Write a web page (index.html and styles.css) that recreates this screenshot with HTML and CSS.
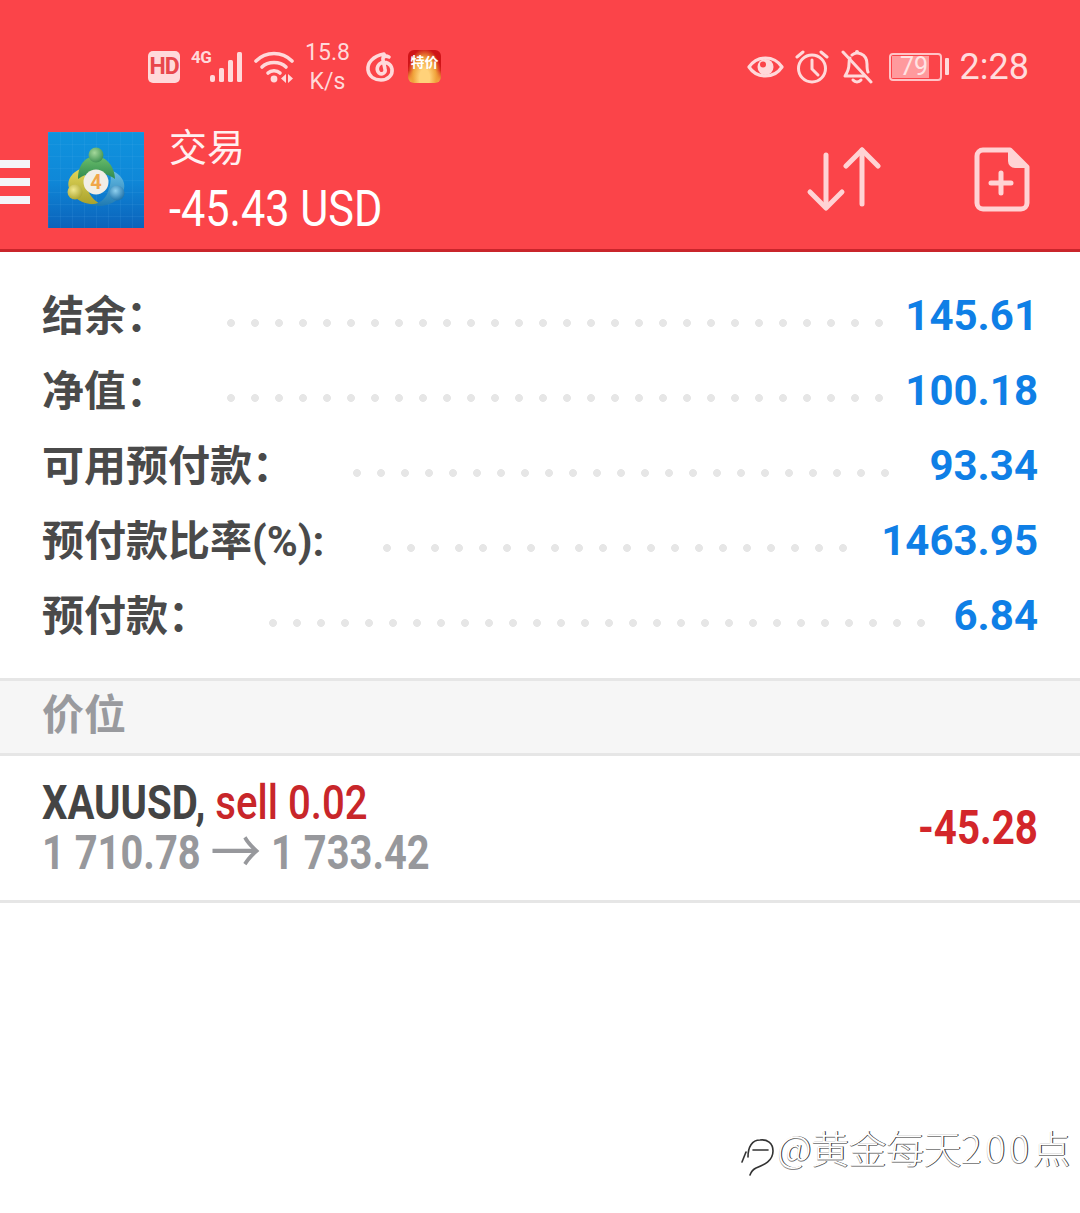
FILE: index.html
```html
<!DOCTYPE html>
<html lang="zh">
<head>
<meta charset="utf-8">
<title>交易</title>
<link rel="stylesheet" href="styles.css">
</head>
<body>
<div class="page">
  <header class="appbar">
    <div class="status">
      <div class="status-left">
        <span class="hd">HD</span>
        <span class="net">
          <span class="net-label">4G</span>
          <svg class="signal" width="35" height="32" viewBox="0 0 35 32"><g fill="#ffd9da"><rect x="1" y="24" width="5" height="7" rx="2"/><rect x="10" y="17" width="5" height="14" rx="1.5"/><rect x="19" y="9" width="5" height="22" rx="1.5"/><rect x="28" y="1" width="5" height="30" rx="1.5"/></g></svg>
        </span>
        <svg class="wifi" width="40" height="34" viewBox="0 0 40 34"><g fill="none" stroke="#ffd9da" stroke-width="3.6" stroke-linecap="round"><path d="M2 10C12 0 28 0 38 10"/><path d="M8 16C14 10 26 10 32 16"/><path d="M14 22C17 19 23 19 26 22"/></g><circle cx="20" cy="28" r="3.4" fill="#ffd9da"/><path d="M32 23v9l-5-4.500zM34 23l5 4.500-5 4.500z" fill="#ffd9da"/></svg>
        <span class="speed"><span>15.8</span><span>K/s</span></span>
        <svg class="netease" width="32" height="32" viewBox="0 0 32 32"><path d="M19 3C8 5 2 12 3 19c1 7 7 10 13 10 7 0 12-5 11-11-1-5-6-8-11-6-4 2-5 7-2 10 3 2 7 0 6-4l-2-9c-.500-3 2-5 6-3" fill="none" stroke="#ffd9da" stroke-width="3.600" stroke-linecap="round"/></svg>
        <span class="promo"><span class="promo-text">特价</span></span>
      </div>
      <div class="status-right">
        <svg class="eye" width="37" height="30" viewBox="0 0 37 30"><path d="M2 15C10 3 27 3 35 15 27 27 10 27 2 15z" fill="none" stroke="#ffd9da" stroke-width="3.200" stroke-linejoin="round"/><circle cx="18.500" cy="15" r="8" fill="#ffd9da"/><circle cx="16" cy="12.500" r="3" fill="#fb4449"/></svg>
        <svg class="alarm" width="34" height="34" viewBox="0 0 34 34"><g fill="none" stroke="#ffd9da" stroke-width="3" stroke-linecap="round"><circle cx="17" cy="18.500" r="13.500"/><path d="M17 10v9l6 6"/><path d="M2 7l6-5M32 7l-6-5"/></g></svg>
        <svg class="bell" width="32" height="34" viewBox="0 0 32 34"><g fill="none" stroke="#ffd9da" stroke-width="3" stroke-linecap="round" stroke-linejoin="round"><path d="M9 8c-1 2-1 4-1 6 0 6-2 9-4 12h19"/><path d="M11 5c4-4 15-2 15 9 0 4 0 6 1 8"/><path d="M2 2l28 30"/><path d="M12 30c2 2.500 6 2.500 8 0"/></g><rect x="14" y="0" width="4" height="4" rx="2" fill="#ffd9da"/></svg>
        <span class="battery-wrap">
          <span class="battery"><span class="battery-fill"></span><span class="battery-num">79</span></span>
          <span class="battery-tip"></span>
        </span>
        <span class="clock">2:28</span>
      </div>
    </div>
    <div class="toolbar">
      <div class="burger"><i></i><i></i><i></i></div>
      <svg class="logo" width="96" height="96" viewBox="0 0 96 96">
        <defs>
          <linearGradient id="sky" x1="0" y1="0" x2="0" y2="1"><stop offset="0" stop-color="#0f93de"/><stop offset=".5" stop-color="#0f88d8"/><stop offset="1" stop-color="#0b62ba"/></linearGradient>
          <pattern id="gridlines" width="12" height="12" patternUnits="userSpaceOnUse"><path d="M12 0H0V12" fill="none" stroke="#5fb8ea" stroke-opacity=".22" stroke-width="1"/></pattern>
          <linearGradient id="gGreen" x1="0" y1="0" x2="0" y2="1"><stop offset="0" stop-color="#6cbf6c"/><stop offset="1" stop-color="#2f8a4e"/></linearGradient>
          <linearGradient id="gYellow" x1="0" y1="0" x2="0" y2="1"><stop offset="0" stop-color="#e3d85c"/><stop offset="1" stop-color="#a9a22c"/></linearGradient>
          <linearGradient id="gBlue" x1="0" y1="0" x2="0" y2="1"><stop offset="0" stop-color="#6cc0e6"/><stop offset="1" stop-color="#1f7ab2"/></linearGradient>
          <radialGradient id="hGreen" cx=".4" cy=".35" r=".7"><stop offset="0" stop-color="#a4d89a"/><stop offset="1" stop-color="#3a8f4e"/></radialGradient>
          <radialGradient id="hYellow" cx=".4" cy=".35" r=".7"><stop offset="0" stop-color="#f0e88c"/><stop offset="1" stop-color="#a9a22c"/></radialGradient>
          <radialGradient id="hBlue" cx=".4" cy=".35" r=".7"><stop offset="0" stop-color="#8fd0ee"/><stop offset="1" stop-color="#1b6ea6"/></radialGradient>
        </defs>
        <rect width="96" height="96" fill="url(#sky)"/>
        <rect width="96" height="96" fill="url(#gridlines)"/>
        <path d="M36 36C26 38 18 47 21 56c4 12 17 18 31 16-6-4-10-8-12-14-2-6-3-14-4-22z" fill="url(#gYellow)"/>
        <path d="M62 38c12 4 18 14 12 24-6 10-20 15-34 10 8 1 14-2 18-8 4-6 6-18 4-26z" fill="url(#gBlue)"/>
        <path d="M30 47c0-17 10-23 18-23s19 9 19 23c-5-4-12-6-19-6s-13 2-18 6z" fill="url(#gGreen)"/>
        <circle cx="48" cy="23" r="7.500" fill="url(#hGreen)"/>
        <circle cx="27" cy="60" r="7.500" fill="url(#hYellow)"/>
        <circle cx="69" cy="61" r="7.500" fill="url(#hBlue)"/>
        <circle cx="48" cy="50" r="12.500" fill="#f1eee6"/>
        <text class="logo-four" x="48" y="57">4</text>
      </svg>
      <div class="titles">
        <span class="title">交易</span>
        <span class="amount narrow">-45.43 USD</span>
      </div>
      <div class="actions">
        <svg class="sort" width="76" height="66" viewBox="0 0 76 66"><g fill="none" stroke="#ffd3d4" stroke-width="5" stroke-linecap="round" stroke-linejoin="round"><path d="M20 8v52"/><path d="M4 45l16 16 16-16"/><path d="M56 3v54"/><path d="M40 19L56 3l16 16"/></g></svg>
        <svg class="doc" width="56" height="66" viewBox="0 0 56 66"><path d="M9 3h27l17 17v36a6 6 0 0 1-6 6H9a6 6 0 0 1-6-6V9a6 6 0 0 1 6-6z" fill="none" stroke="#ffd3d4" stroke-width="5" stroke-linejoin="round"/><path d="M34 3v11a7 7 0 0 0 7 7h12z" fill="#ffd3d4"/><path d="M27 26v20M17 36h20" stroke="#ffd3d4" stroke-width="5" stroke-linecap="round"/></svg>
      </div>
    </div>
  </header>

  <section class="summary">
    <div class="row"><span class="label">结余：</span><span class="dots"></span><span class="value">145.61</span></div>
    <div class="row"><span class="label">净值：</span><span class="dots"></span><span class="value">100.18</span></div>
    <div class="row"><span class="label">可用预付款：</span><span class="dots dots-short"></span><span class="value">93.34</span></div>
    <div class="row"><span class="label">预付款比率(%):</span><span class="dots"></span><span class="value">1463.95</span></div>
    <div class="row"><span class="label">预付款：</span><span class="dots"></span><span class="value">6.84</span></div>
  </section>

  <div class="section-head">价位</div>

  <div class="position">
    <div class="pos-text">
      <div class="pos-line line-main"><b class="symbol">XAUUSD,</b> <span class="side">sell 0.02</span></div>
      <div class="pos-line prices">1 710.78 <span class="arrow">→</span> 1 733.42</div>
    </div>
    <div class="profit">-45.28</div>
  </div>

  <div class="watermark">
    <svg class="wm-logo" width="36" height="42" viewBox="0 0 36 42"><g fill="none" stroke="#333" stroke-width="1.600" stroke-linecap="round"><path d="M8 22C8 12 12 5 20 5c7-1 13 3 13 11 0 10-9 14-17 17-4 2-5 4-6 7"/><path d="M13 15h15"/><path d="M2 27l4-10"/></g></svg>
    <span class="wm-text">@黄金每天<span class="wm-num">200</span>点</span>
  </div>
</div>
</body>
</html>
```

FILE: styles.css
```css
* { box-sizing: border-box; }
html, body { margin: 0; padding: 0; background: #fff; }
body { font-family: Roboto, "Noto Sans CJK SC", sans-serif; }
.page { position: relative; width: 1080px; height: 1213px; overflow: hidden; background: #fff; }

.appbar { height: 252px; background: #fb4449; border-bottom: 3px solid #c9252b; }

.status { height: 125px; padding: 8px 51px 0 148px; display: flex; justify-content: space-between; align-items: center; }
.status-left, .status-right { display: flex; align-items: center; }
.hd { width: 32px; height: 32px; border-radius: 5px; background: #ffd9da; color: #e9474c; font: 700 23px/32px Roboto, sans-serif; text-align: center; letter-spacing: -1px; }
.net { position: relative; width: 53px; height: 32px; margin-left: 11px; }
.net-label { position: absolute; left: 0; top: -3px; color: #ffd9da; font: 700 17px/18px Roboto, sans-serif; letter-spacing: -.5px; }
.signal { position: absolute; left: 18px; top: 0; }
.wifi { margin-left: 10px; margin-top: 2px; }
.speed { display: flex; flex-direction: column; align-items: center; margin-left: 11px; width: 45px; color: #ffd9da; font: 400 23px/29px Roboto, sans-serif; }
.netease { margin-left: 15px; }
.promo { width: 33px; height: 33px; margin-left: 11px; border-radius: 6px; background: radial-gradient(ellipse at 50% 85%, #ffd27a 0 22%, #f0a23a 50%, transparent 75%), linear-gradient(#cf1418 0 62%, #e8812f 85%, #f5b85f); display: flex; justify-content: center; padding-top: 3px; }
.promo-text { color: #fff; font: 700 14px/16px "Noto Sans CJK SC", sans-serif; }

.eye { margin-right: 11px; }
.alarm { margin-right: 12px; }
.bell { margin-right: 16px; }
.battery-wrap { display: flex; align-items: center; margin-right: 11px; }
.battery { position: relative; width: 53px; height: 28px; border: 2px solid #ffc4c6; border-radius: 4px; display: block; }
.battery-fill { position: absolute; left: 1px; top: 1px; bottom: 1px; width: 37px; background: #ff9a9d; }
.battery-num { position: absolute; inset: 0; text-align: center; color: #ffe3e3; font: 400 25px/24px Roboto, sans-serif; padding-right: 2px; }
.battery-tip { width: 4px; height: 17px; margin-left: 3px; border-radius: 1px; background: #ffd9da; }
.clock { color: #ffdcdd; font: 400 36px/42px Roboto, sans-serif; }

.toolbar { height: 124px; display: flex; align-items: flex-start; }
.burger { width: 30px; margin-top: 35px; display: flex; flex-direction: column; gap: 10px; }
.burger i { display: block; height: 8px; background: #f4f4f8; }
.logo { margin: 7px 0 0 18px; }
.titles { margin-left: 25px; display: flex; flex-direction: column; margin-top: -3px; }
.title { color: #fff0f0; font: 400 38px/46px "Noto Sans CJK SC", sans-serif; }
.amount { color: #fff; font: 400 50px/58px Roboto, sans-serif; margin-top: 12px; }
.narrow { display: inline-block; transform: scaleX(.865); transform-origin: left center; white-space: nowrap; }
.actions { margin-left: auto; display: flex; align-items: flex-start; padding-right: 50px; }
.sort { margin-top: 22px; }
.doc { margin: 22px 0 0 92px; }

.summary { padding: 27px 42px 0 42px; height: 426px; }
.row { height: 75px; display: flex; align-items: center; }
.label { color: #4a4a4a; font: 700 42px/75px Roboto, "Noto Sans CJK SC", sans-serif; white-space: nowrap; }
.dots { flex: 1; height: 10px; margin: 12px 20px 0 58px; background: radial-gradient(circle at 5px 5px, #e6e6e6 3.600px, transparent 4.200px) left center / 24px 10px repeat-x; }
.dots-short { margin-right: 30px; }
.value { color: #0f7fe6; font: 700 42px/75px Roboto, sans-serif; white-space: nowrap; margin-top: -2px; }

.section-head { height: 78px; border-top: 3px solid #e6e6e6; border-bottom: 3px solid #e6e6e6; background: #f6f6f6; color: #999a9e; padding-left: 42px; font: 700 42px/62px "Noto Sans CJK SC", sans-serif; }

.position { height: 147px; border-bottom: 3px solid #e6e6e6; padding: 0 42px; display: flex; justify-content: space-between; align-items: center; }
.pos-text { white-space: nowrap; }
.pos-line { font-size: 48px; line-height: 50px; transform: scaleX(.83); transform-origin: left center; }
.line-main { transform: scaleX(.836); }
.symbol { color: #444; font-weight: 700; }
.side { color: #c8262a; font-weight: 500; }
.prices { color: #97989c; font-weight: 700; }
.arrow { font-size: 61px; line-height: 0; font-weight: 400; vertical-align: -5px; }
.profit { color: #d3262a; font: 700 48px/56px Roboto, sans-serif; transform: scaleX(.84); transform-origin: right center; }

.watermark { position: absolute; left: 740px; top: 1124px; display: flex; align-items: flex-start; }
.wm-logo { margin-top: 11px; margin-right: 1px; }
.wm-text { color: #fff; font: 300 38px/46px "Noto Sans CJK SC", sans-serif; letter-spacing: -.5px; text-shadow: 1px 0 0 #333, 0 1px 0 #888; white-space: nowrap; }
.wm-num { letter-spacing: 3.500px; }
.logo-four { fill: #f0a64a; font: 700 20px Roboto, sans-serif; text-anchor: middle; }
```
